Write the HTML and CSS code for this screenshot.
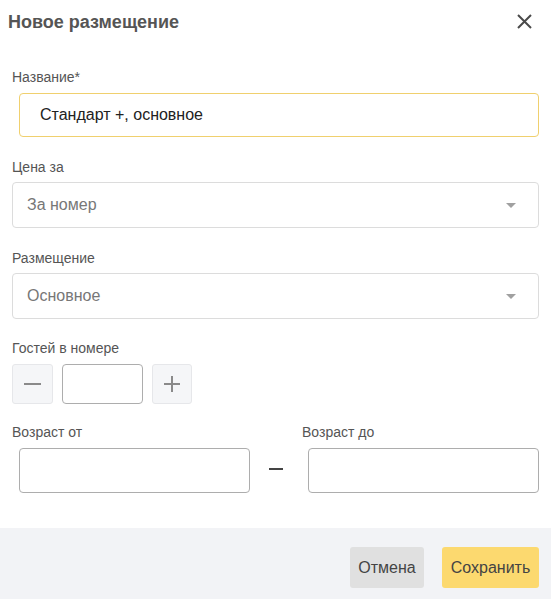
FILE: index.html
```html
<!DOCTYPE html>
<html lang="ru">
<head>
<meta charset="utf-8">
<title>Новое размещение</title>
<link rel="stylesheet" href="styles.css">
</head>
<body>
<div class="dialog">
  <div class="header">
    <div class="title">Новое размещение</div>
    <button class="close" aria-label="Закрыть">
      <svg width="15" height="15" viewBox="0 0 15 15"><path d="M1 1 L14 14 M14 1 L1 14" stroke="#4a4a4a" stroke-width="2" fill="none"/></svg>
    </button>
  </div>
  <div class="body">
    <div class="field f1">
      <div class="label">Название*</div>
      <div class="input input-name">Стандарт +, основное</div>
    </div>
    <div class="field f2">
      <div class="label">Цена за</div>
      <div class="select"><span>За номер</span><i class="arrow"></i></div>
    </div>
    <div class="field f3">
      <div class="label">Размещение</div>
      <div class="select"><span>Основное</span><i class="arrow"></i></div>
    </div>
    <div class="field f4">
      <div class="label">Гостей в номере</div>
      <div class="stepper">
        <button class="step">
          <svg width="17" height="2" viewBox="0 0 17 2"><rect width="17" height="2" fill="#8a8a8a"/></svg>
        </button>
        <div class="count"></div>
        <button class="step">
          <svg width="16" height="16" viewBox="0 0 16 16"><rect x="0" y="7" width="16" height="2" fill="#8a8a8a"/><rect x="7" y="0" width="2" height="16" fill="#8a8a8a"/></svg>
        </button>
      </div>
    </div>
    <div class="field f5 ages">
      <div class="age age-from">
        <div class="label">Возраст от</div>
        <div class="age-input"></div>
      </div>
      <div class="age-sep"><div class="dash"></div></div>
      <div class="age age-to">
        <div class="label">Возраст до</div>
        <div class="age-input"></div>
      </div>
    </div>
  </div>
  <div class="footer">
    <button class="btn btn-cancel">Отмена</button>
    <button class="btn btn-save">Сохранить</button>
  </div>
</div>
</body>
</html>
```
FILE: styles.css
```css
* { box-sizing: border-box; }
html, body { margin: 0; padding: 0; background: #fff; }
body { font-family: "Liberation Sans", Arial, sans-serif; color: #555; }
.dialog { width: 551px; height: 599px; display: flex; flex-direction: column; }
.header { height: 44px; display: flex; align-items: center; justify-content: space-between; padding: 0 19px 0 8px; }
.title { font-size: 18px; font-weight: bold; color: #555; line-height: 21px; padding-top: 1px; }
.close { border: 0; background: none; padding: 0; width: 15px; height: 15px; display: flex; margin-top: -1px; }
.body { padding: 25px 12px 35px 12px; flex: 0 0 auto; }
.field { display: flex; flex-direction: column; }
.label { font-size: 14px; line-height: 16px; color: #555; margin-bottom: 8px; }
.f2, .f3 { margin-top: 22px; }
.f2 .label, .f3 .label { margin-bottom: 7px; }
.f4 { margin-top: 21px; }
.f5 { margin-top: 20px; }
.input { height: 44px; border: 1px solid #f0d06e; border-radius: 4px; margin-left: 7px; padding-left: 20px; font-size: 16px; color: #222; display: flex; align-items: center; }
.select { height: 46px; border: 1px solid #dcdcdc; border-radius: 4px; padding: 0 22px 0 14px; display: flex; align-items: center; justify-content: space-between; font-size: 16px; color: #777; }
.arrow { width: 0; height: 0; border-left: 5px solid transparent; border-right: 5px solid transparent; border-top: 5px solid #a0a0a0; margin-top: 1px; }
.stepper { display: flex; gap: 9px; }
.step { width: 41px; height: 40px; background: #f5f6f8; border: 1px solid #e6e7ea; border-radius: 3px; display: flex; align-items: center; justify-content: center; padding: 0; }
.step + .count + .step { width: 40px; }
.count { width: 81px; height: 40px; border: 1px solid #adadad; border-radius: 4px; }
.ages { flex-direction: row; }
.age { display: flex; flex-direction: column; }
.age-from { width: 238px; }
.age-from .age-input { margin-left: 7px; width: 231px; }
.age-sep { width: 52px; padding-top: 44px; padding-left: 19px; }
.dash { width: 14px; height: 2px; background: #444; }
.age-to { flex: 1; }
.age-to .age-input { margin-left: 6px; }
.age-input { height: 45px; border: 1px solid #adadad; border-radius: 4px; }
.footer { flex: 1; background: #f2f3f6; display: flex; justify-content: flex-end; align-items: flex-start; gap: 18px; padding: 19px 12px 0 12px; }
.btn { height: 41px; border: 0; border-radius: 3px; font-family: "Liberation Sans", Arial, sans-serif; font-size: 16px; color: #444; padding: 0; }
.btn-cancel { width: 74px; background: #e0e0e0; }
.btn-save { width: 97px; background: #fcd96f; }
```
